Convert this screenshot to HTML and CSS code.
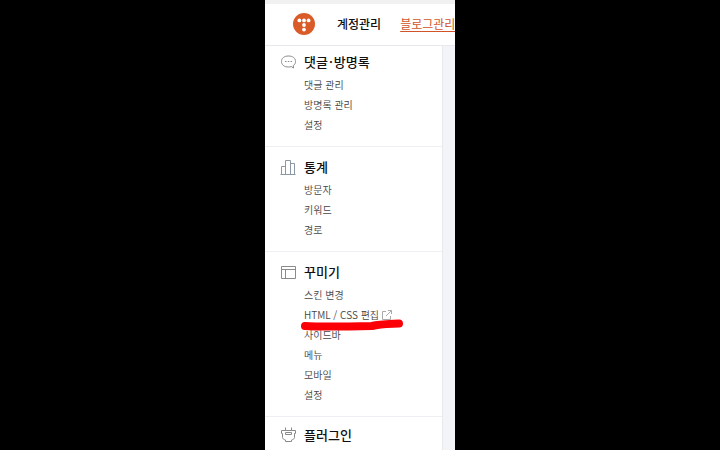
FILE: index.html
```html
<!DOCTYPE html>
<html lang="ko">
<head>
    <meta charset="UTF-8">
    <meta name="viewport" content="width=device-width, initial-scale=1.0">
    <title>블로그관리</title>
    <link rel="stylesheet" href="styles.css">
</head>
<body>
    <div class="screen">
        <header class="header">
            <a href="#" class="logo" aria-label="홈">
                <svg width="22" height="22" viewBox="0 0 22 22">
                    <circle cx="11" cy="11" r="11" fill="#d95b28"/>
                    <g fill="#fff">
                        <circle cx="6.4" cy="7.4" r="1.9"/>
                        <circle cx="11" cy="7.4" r="1.9"/>
                        <circle cx="15.6" cy="7.4" r="1.9"/>
                        <circle cx="11" cy="12" r="1.9"/>
                        <circle cx="11" cy="16.6" r="1.9"/>
                    </g>
                </svg>
            </a>
            <nav class="gnb">
                <a href="#">계정관리</a>
                <a href="#" class="active">블로그관리</a>
            </nav>
        </header>

        <div class="container">
            <nav class="sidebar">
                <section class="menu">
                    <h2 class="menu-title">
                        <svg class="icon" viewBox="0 0 16 16">
                            <path d="M8.500 2C4 2 1.500 4.300 1.500 7.500s2.500 5.500 7 5.500c1 0 2-.1 2.800-.4L13.500 14l-.2-2.500C15 10.500 15.500 9 15.500 7.500 15.500 4.300 13 2 8.500 2z"/>
                            <path d="M5 7.500h1.500M7.800 7.500h1.500M10.600 7.500h1.500"/>
                        </svg>
                        <span>댓글<span class="dot">·</span>방명록</span>
                    </h2>
                    <ul class="menu-list">
                        <li><a href="#">댓글 관리</a></li>
                        <li><a href="#">방명록 관리</a></li>
                        <li><a href="#">설정</a></li>
                    </ul>
                </section>

                <section class="menu">
                    <h2 class="menu-title">
                        <svg class="icon icon-blue" viewBox="0 0 16 16">
                            <path d="M1.500 15.500v-8h4v8M5.500 15.500v-14h5v14M10.500 15.500v-11h4v11M0.500 15.500h15"/>
                        </svg>
                        통계
                    </h2>
                    <ul class="menu-list">
                        <li><a href="#">방문자</a></li>
                        <li><a href="#">키워드</a></li>
                        <li><a href="#">경로</a></li>
                    </ul>
                </section>

                <section class="menu">
                    <h2 class="menu-title">
                        <svg class="icon" viewBox="0 0 16 16">
                            <path d="M1.500 2.500h14v12h-14zM1.500 5.500h14M5.500 5.500v9"/>
                        </svg>
                        꾸미기
                    </h2>
                    <ul class="menu-list">
                        <li><a href="#">스킨 변경</a></li>
                        <li class="marked">
                            <a href="#">HTML / CSS 편집
                                <svg class="icon-link" viewBox="0 0 10 10">
                                    <path d="M4 1.500H.5v8h8V6M6 .5h3.500V4M9.500 .5L4 6"/>
                                </svg>
                            </a>
                            <svg class="marker" viewBox="0 0 104 12">
                                <path d="M5 7C20 8 50 7.500 72 7C80 5 90 5 99 4.500"/>
                            </svg>
                        </li>
                        <li><a href="#">사이드바</a></li>
                        <li><a href="#">메뉴</a></li>
                        <li><a href="#">모바일</a></li>
                        <li><a href="#">설정</a></li>
                    </ul>
                </section>

                <section class="menu">
                    <h2 class="menu-title">
                        <svg class="icon" viewBox="0 0 16 16">
                            <path d="M1.500 3.500h14v3h-1v4c0 1-1 2-3 2.500v1.500h-6V13c-2-.5-3-1.500-3-2.500v-4h-1zM5.500 .5v3M11.500 .5v3M5.500 5.500h6v2h-6z"/>
                        </svg>
                        플러그인
                    </h2>
                </section>
            </nav>
        </div>
    </div>
</body>
</html>
```

FILE: styles.css
```css
* {
    box-sizing: border-box;
}

body {
    margin: 0;
    background: #000;
    font-family: "Noto Sans CJK KR", "Noto Sans", sans-serif;
}

a {
    color: inherit;
    text-decoration: none;
}

.screen {
    display: flex;
    flex-direction: column;
    max-width: 190px;
    height: 100vh;
    margin: 0 auto;
    overflow: hidden;
    background: #f2f4f7;
}

/* Header */
.header {
    display: flex;
    flex-shrink: 0;
    align-items: center;
    padding: 9px 0 10px 28px;
    background: #fff;
    border-top: 4px solid #f1f1f2;
    border-bottom: 1px solid #e8e9ee;
}

.logo {
    display: flex;
    flex-shrink: 0;
}

.gnb {
    display: flex;
    gap: 19px;
    margin-left: 22px;
    font-size: 12px;
    font-weight: 500;
    line-height: 20px;
    white-space: nowrap;
    color: #111;
}

.gnb .active {
    color: #d0532a;
    font-weight: 400;
    text-decoration: underline;
    text-underline-offset: 2px;
}

/* Sidebar */
.container {
    flex: 1;
    padding-right: 12px;
}

.sidebar {
    min-height: 100%;
    background: #fff;
    border-right: 1px solid #e8eaee;
}

.menu {
    padding: 10px 15px 11px;
    border-bottom: 1px solid #eeeff2;
}

.menu:first-child {
    padding-top: 6px;
}

.menu:last-child {
    padding-top: 8px;
    border-bottom: none;
}

.menu-title {
    display: flex;
    align-items: center;
    gap: 8px;
    margin: 0 0 3px;
    font-size: 13px;
    font-weight: 500;
    line-height: 20px;
    color: #111;
}

.menu-title .dot {
    margin: 0 1px;
}

.menu-list {
    margin: 0;
    padding: 0 0 0 24px;
    list-style: none;
    font-size: 10px;
    font-weight: 350;
    line-height: 20px;
    color: #444;
}

.icon {
    width: 16px;
    height: 16px;
    fill: none;
    stroke: #8a8a8a;
}

.icon-blue {
    stroke: #8b97a3;
}

.icon-link {
    width: 10px;
    height: 10px;
    vertical-align: -1px;
    fill: none;
    stroke: #aaa;
}

/* Red pen mark under the item */
.marked {
    position: relative;
}

.marker {
    position: absolute;
    top: 14px;
    left: -4px;
    width: 104px;
    height: 12px;
    fill: none;
    stroke: #fb0007;
    stroke-width: 8px;
    stroke-linecap: round;
}
```
